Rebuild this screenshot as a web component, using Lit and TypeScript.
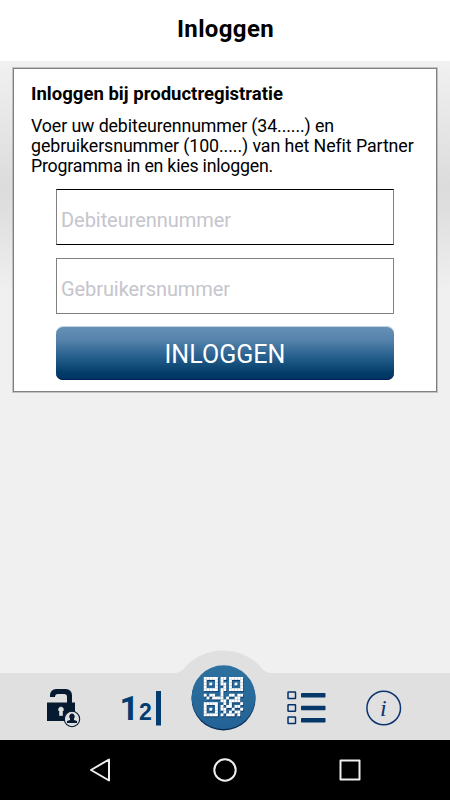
import { LitElement, html, css, svg } from "lit";
import { customElement } from "lit/decorators.js";

// Modules of the QR symbol; "#" is a filled module.
const QR = [
  "#####.##.#####",
  "#...#.#..#...#",
  "#.#.#.##.#.#.#",
  "#...#..#.#...#",
  "#####.##.#####",
  "......#.......",
  "#.##..#..##.##",
  ".#.####.#..##.",
  "......##.####.",
  "#####..#.#...#",
  "#...#.#.##.##.",
  "#.#.#.##..#..#",
  "#...#..#.#.##.",
  "#####.#.###.#.",
];

@customElement("app-root")
export class AppRoot extends LitElement {
  static styles = css`
    :host { display: flex; flex-direction: column; width: 450px; height: 800px; overflow: hidden; font-family: Roboto, sans-serif; color: #000; background: #f0f0f0; }
    * { box-sizing: border-box; }
    header { height: 61px; flex: none; background: #fff; display: flex; justify-content: center; padding: 15px 0 0 1px; }
    h1 { margin: 0; font-size: 24px; line-height: 28px; font-weight: 700; white-space: nowrap; }
    h1 span, h2 span, .line span, .placeholder, .label { display: inline-block; white-space: nowrap; }
    main { flex: 1; min-height: 0; padding: 7px 13px 0 13px; background: linear-gradient(#f1f1f1 0, #eaeaea 40px, #dcdcdc 125px, #dfdfdf 150px, #f0f0f0 230px); }
    .card { width: 424px; height: 324px; background: #fff; border: 1px solid #808080; box-shadow: 0 0 0 1px rgb(128 128 128 / 40%); padding: 14px 17px 0; }
    h2 { margin: 0; font-size: 18.5px; line-height: 22px; font-weight: 700; }
    .copy { padding-top: 11px; height: 83px; font-size: 17.8px; line-height: 20px; }
    .form { display: flex; flex-direction: column; gap: 13px; padding: 1px 0 0 25px; }
    .field { width: 338px; height: 56px; border: 1px solid #808080; padding: 18px 4px 0; font-size: 20px; line-height: 24px; color: #c5c5cc; }
    .field.active { border-top-color: #000; border-bottom-color: #000; }
    .btn { width: 338px; height: 53px; border: 0; border-radius: 7px; padding: 1px 0 0; background: linear-gradient(#6690b6, #5683ac 24%, #215b89 60%, #033c68 87%, #003460); box-shadow: inset 0 -1px #002058, 0 -1px rgb(102 144 182 / 40%); color: #fff; font: 25px/54px Roboto, sans-serif; text-align: center; }
    footer { position: relative; flex: none; height: 67px; background: #e0e0e0; }
    footer svg { position: absolute; left: 0; bottom: 0; display: block; }
    .sys { height: 60px; flex: none; background: #000; }
    .sys svg { display: block; }
  `;

  private copy: [string, number][] = [
    ["Voer uw debiteurennummer (34......) en", 303],
    ["gebruikersnummer (100.....) van het Nefit Partner", 382],
    ["Programma in en kies inloggen.", 242],
  ];

  // Spreads each text evenly over its intended line width.
  async firstUpdated() {
    await document.fonts.ready;
    this.renderRoot.querySelectorAll<HTMLElement>("[data-w]").forEach((el) => {
      const extra = (Number(el.dataset.w) - el.getBoundingClientRect().width) / (el.textContent ?? "x").length;
      el.style.letterSpacing = `${extra}px`;
    });
  }

  private modules() {
    return QR.flatMap((row, y) =>
      [...row].map((c, x) => (c === "#" ? svg`<rect x=${x} y=${y} width="1.03" height="1.03"/>` : null))
    );
  }

  render() {
    return html`
      <header><h1><span data-w="97">Inloggen</span></h1></header>
      <main>
        <section class="card">
          <h2><span data-w="252">Inloggen bij productregistratie</span></h2>
          <div class="copy">
            ${this.copy.map(([t, w]) => html`<div class="line"><span data-w=${w}>${t}</span></div>`)}
          </div>
          <div class="form">
            <div class="field active"><span class="placeholder" data-w="170">Debiteurennummer</span></div>
            <div class="field"><span class="placeholder" data-w="169">Gebruikersnummer</span></div>
            <button class="btn"><span class="label" data-w="121">INLOGGEN</span></button>
          </div>
        </section>
      </main>
      <footer>
        <svg width="450" height="92" viewBox="0 648 450 92">
          <defs>
            <linearGradient id="disc" x1="0" y1="0" x2="0" y2="1">
              <stop offset="0" stop-color="#2d719f"/><stop offset="1" stop-color="#236295"/>
            </linearGradient>
          </defs>
          <path d="M176 673Q182 672 186 666A52 52 0 0 1 260 666Q264 672 270 673Z" fill="#e0e0e0"/>
          <g fill="#061a30">
            <path d="M50 697v-2a6 6 0 0 1 6-6h10a6 6 0 0 1 6 6v8h-5v-6q0-3-3-3h-6q-3 0-3 3z"/>
            <rect x="47" y="702.500" width="28" height="18.500"/>
          </g>
          <path d="M61 707a2.500 2.500 0 0 1 1.500 4.500v4h-3v-4a2.500 2.500 0 0 1 1.500-4.500" fill="#e0e0e0" stroke="#e0e0e0" stroke-width=".6"/>
          <circle cx="72" cy="719" r="7.700" fill="#e0e0e0" stroke="#061a30" stroke-width="1.100"/>
          <path d="M72 713.500a3 3 0 0 1 2 5v1.500l3 1v2H67v-2l3-1v-1.500a3 3 0 0 1 2-5" fill="#061a30"/>
          <g fill="#033c70" font-weight="700">
            <text x="119.500" y="720" font-size="34" font-family="Roboto, sans-serif">1</text>
            <text x="139" y="720" font-size="23" font-family="Liberation Sans, sans-serif">2</text>
            <rect x="156" y="691" width="5" height="34.500"/>
          </g>
          <circle cx="223.500" cy="698.500" r="32" fill="#082b58"/>
          <circle cx="223.500" cy="697.200" r="31.900" fill="url(#disc)"/>
          <g transform="translate(204.400 678) scale(2.800)" fill="#0a3868">${this.modules()}</g>
          <g transform="translate(203.800 677) scale(2.800)" fill="#fff">${this.modules()}</g>
          <g fill="none" stroke="#05306a" stroke-width="1.500">
            <rect x="288" y="692" width="7.500" height="6.500" rx=".5"/>
            <rect x="288" y="704.700" width="7.500" height="6.500" rx=".5"/>
            <rect x="288" y="717" width="7.500" height="6.500" rx=".5"/>
          </g>
          <g fill="#053768">
            <rect x="301" y="693" width="24.500" height="4.500" rx=".7"/>
            <rect x="301" y="705.700" width="24.500" height="4.500" rx=".7"/>
            <rect x="301" y="718" width="24.500" height="4.500" rx=".7"/>
          </g>
          <circle cx="383.700" cy="708" r="16.800" fill="none" stroke="#0a3570" stroke-width="1.500"/>
          <text x="380" y="715.500" font-family="Liberation Serif, serif" font-style="italic" font-size="24" fill="#0a3570">i</text>
        </svg>
      </footer>
      <div class="sys">
        <svg width="450" height="60" viewBox="0 740 450 60" fill="none" stroke="#eee" stroke-width="2" stroke-linejoin="round">
          <path d="M109 759.500v21L91 770z"/>
          <circle cx="225" cy="770" r="10.700"/>
          <rect x="340.500" y="760.500" width="19" height="19"/>
        </svg>
      </div>
    `;
  }
}
